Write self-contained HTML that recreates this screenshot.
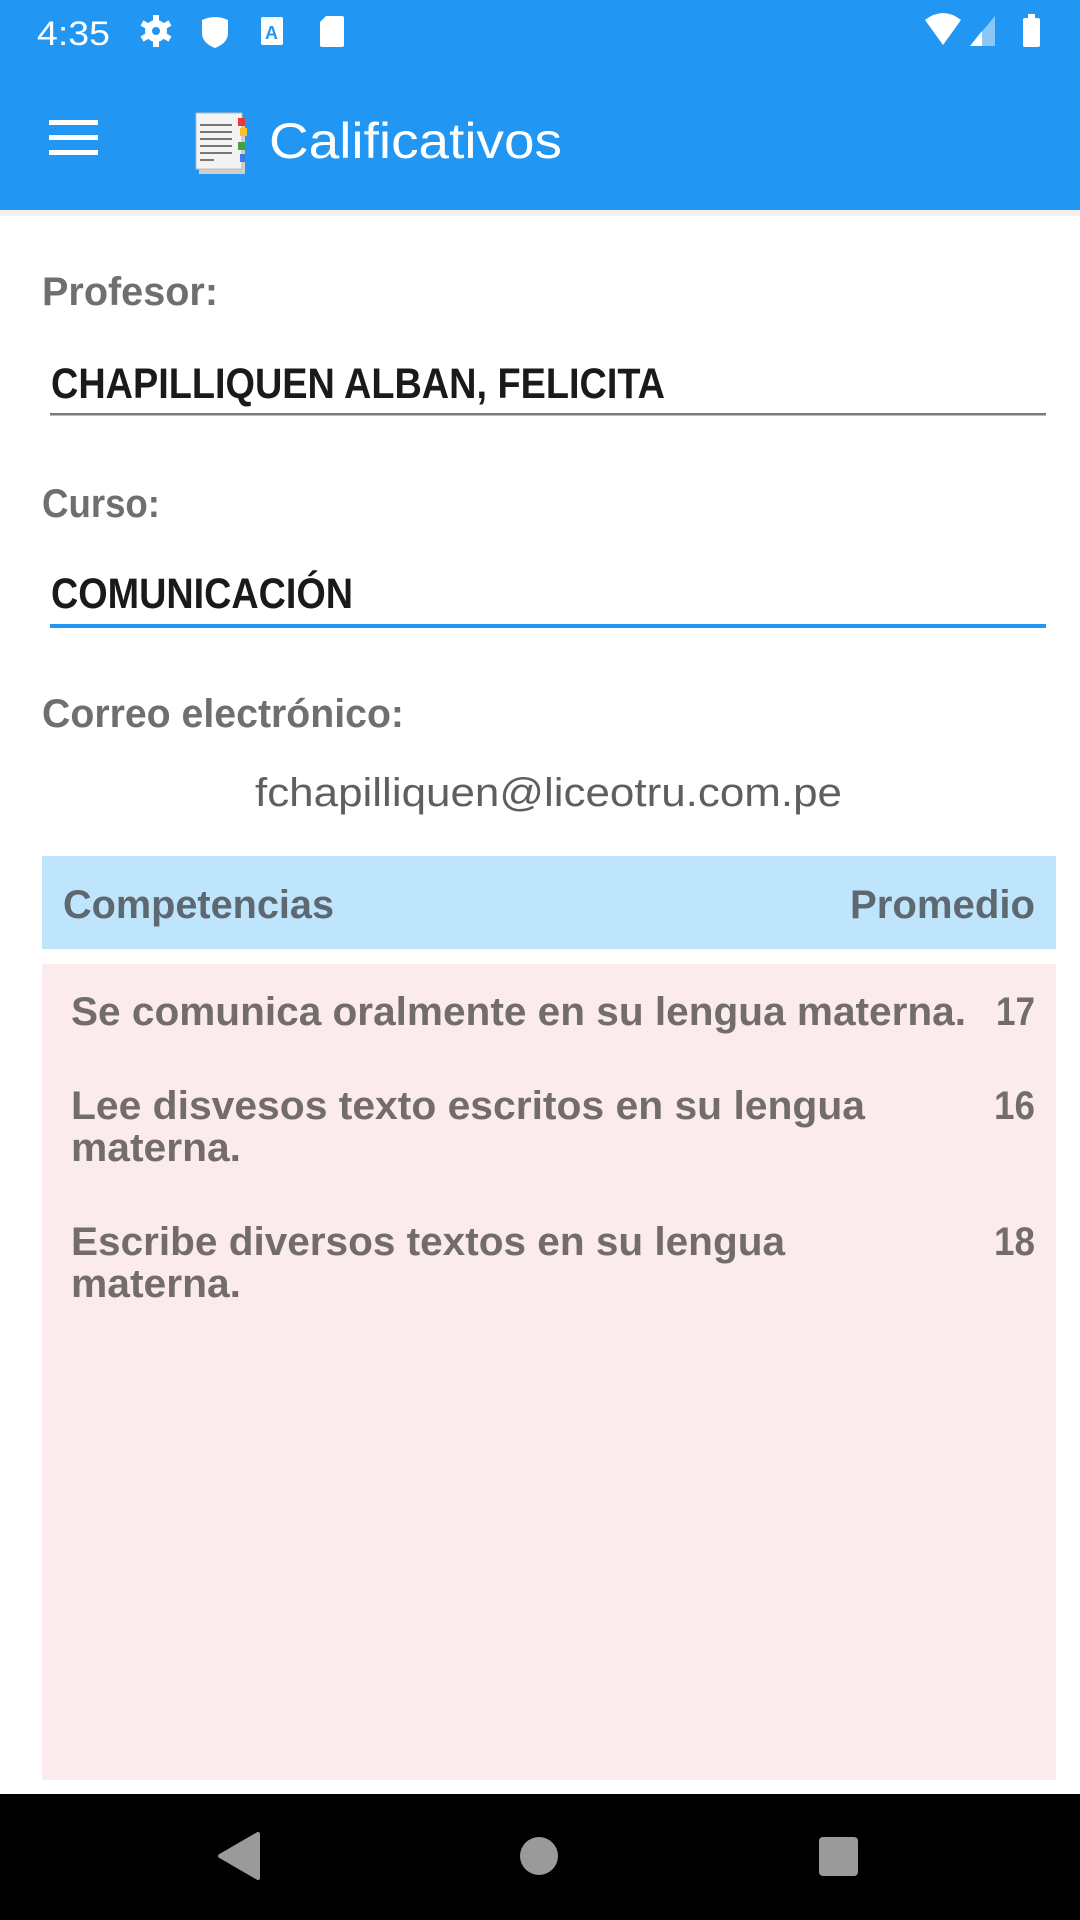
<!DOCTYPE html>
<html><head><meta charset="utf-8"><style>
html,body{margin:0;padding:0;width:1080px;height:1920px;overflow:hidden;background:#fff}
svg{display:block}
text{font-family:"Liberation Sans",sans-serif}
</style></head><body>
<svg width="1080" height="1920" viewBox="0 0 1080 1920" xmlns="http://www.w3.org/2000/svg">
<rect x="0" y="0" width="1080" height="210" fill="#2196F3"/>
<rect x="0" y="210" width="1080" height="6" fill="#f0f0f0"/>
<text x="37" y="45" font-size="34" fill="#fff" textLength="73" lengthAdjust="spacingAndGlyphs">4:35</text>
<g fill="#fff">
  <circle cx="156" cy="31" r="11"/>
  <g stroke="#fff" stroke-width="6"><line x1="156" y1="15" x2="156" y2="47"/><line x1="142" y1="23" x2="170" y2="39"/><line x1="142" y1="39" x2="170" y2="23"/></g>
  <circle cx="156" cy="31" r="4" fill="#2196F3"/>
  <path d="M202 20 Q215 14 228 20 L228 33 Q228 43 215 48 Q202 43 202 33 Z"/>
  <rect x="261" y="17" width="22" height="28" rx="2"/>
  <text x="265" y="39" font-size="18" font-weight="bold" fill="#2196F3">A</text>
  <path d="M326 16 L342 16 Q344 16 344 18 L344 45 Q344 47 342 47 L322 47 Q320 47 320 45 L320 22 Z"/>
  <path d="M925 20 Q943 6 961 20 L943 45 Z"/>
  <path d="M995 16 L995 46 L970 46 Z" fill="#8cc8f7"/>
  <path d="M982 31 L982 46 L970 46 Z"/>
  <rect x="1023" y="18" width="17" height="29" rx="2"/>
  <rect x="1028" y="14" width="7" height="5"/>
</g>
<g fill="#fff"><rect x="49" y="120" width="49" height="5"/><rect x="49" y="135" width="49" height="5"/><rect x="49" y="150" width="49" height="5"/></g>
<g>
  <rect x="199" y="118" width="46" height="56" fill="#cfcfcf"/>
  <rect x="196" y="113" width="46" height="56" fill="#f3f3f3" stroke="#bbb" stroke-width="1"/>
  <g fill="#777"><rect x="200" y="124" width="32" height="2"/><rect x="200" y="131" width="32" height="2"/><rect x="200" y="138" width="32" height="2"/><rect x="200" y="145" width="32" height="2"/><rect x="200" y="152" width="32" height="2"/><rect x="200" y="159" width="14" height="2"/></g>
  <rect x="238" y="118" width="7" height="8" fill="#e53935"/>
  <rect x="240" y="128" width="7" height="8" fill="#fbc02d"/>
  <rect x="238" y="142" width="7" height="8" fill="#43a047"/>
  <rect x="240" y="154" width="6" height="8" fill="#3f7be0"/>
</g>
<text x="269" y="158" font-size="50" fill="#fff" textLength="293" lengthAdjust="spacingAndGlyphs">Calificativos</text>
<text x="42" y="305" font-size="40" font-weight="bold" fill="#6f6f6f" textLength="176" lengthAdjust="spacingAndGlyphs">Profesor:</text>
<text x="51" y="398" font-size="43" font-weight="bold" fill="#1a1a1a" textLength="614" lengthAdjust="spacingAndGlyphs">CHAPILLIQUEN ALBAN, FELICITA</text>
<rect x="50" y="413" width="996" height="2.5" fill="#7a7a7a"/>
<text x="42" y="517" font-size="40" font-weight="bold" fill="#6f6f6f" textLength="118" lengthAdjust="spacingAndGlyphs">Curso:</text>
<text x="51" y="608" font-size="43" font-weight="bold" fill="#1a1a1a" textLength="302" lengthAdjust="spacingAndGlyphs">COMUNICACIÓN</text>
<rect x="50" y="624" width="996" height="4" fill="#2196F3"/>
<text x="42" y="727" font-size="40" font-weight="bold" fill="#6f6f6f" textLength="362" lengthAdjust="spacingAndGlyphs">Correo electrónico:</text>
<text x="255" y="806" font-size="40" fill="#5f5f5f" textLength="587" lengthAdjust="spacingAndGlyphs">fchapilliquen@liceotru.com.pe</text>
<rect x="42" y="856" width="1014" height="93" fill="#BFE5FC"/>
<text x="63" y="918" font-size="40" font-weight="bold" fill="#5d6870" textLength="271" lengthAdjust="spacingAndGlyphs">Competencias</text>
<text x="850" y="918" font-size="40" font-weight="bold" fill="#5d6870" textLength="185" lengthAdjust="spacingAndGlyphs">Promedio</text>
<rect x="42" y="964" width="1014" height="816" fill="#FCEBEC"/>
<g font-size="40" font-weight="bold" fill="#736c6c">
<text x="71" y="1025" textLength="895" lengthAdjust="spacingAndGlyphs">Se comunica oralmente en su lengua materna.</text>
<text x="996" y="1025" textLength="39" lengthAdjust="spacingAndGlyphs">17</text>
<text x="71" y="1119" textLength="794" lengthAdjust="spacingAndGlyphs">Lee disvesos texto escritos en su lengua</text>
<text x="71" y="1161" textLength="170" lengthAdjust="spacingAndGlyphs">materna.</text>
<text x="994" y="1119" textLength="41" lengthAdjust="spacingAndGlyphs">16</text>
<text x="71" y="1255" textLength="714" lengthAdjust="spacingAndGlyphs">Escribe diversos textos en su lengua</text>
<text x="71" y="1297" textLength="170" lengthAdjust="spacingAndGlyphs">materna.</text>
<text x="994" y="1255" textLength="41" lengthAdjust="spacingAndGlyphs">18</text>
</g>
<rect x="0" y="1794" width="1080" height="126" fill="#000"/>
<path d="M258 1834 L258 1878 L220 1856 Z" fill="#9a9a9a" stroke="#9a9a9a" stroke-width="4" stroke-linejoin="round"/>
<circle cx="539" cy="1856" r="19" fill="#9a9a9a"/>
<rect x="819" y="1837" width="39" height="39" rx="4" fill="#9a9a9a"/>
</svg>
</body></html>
